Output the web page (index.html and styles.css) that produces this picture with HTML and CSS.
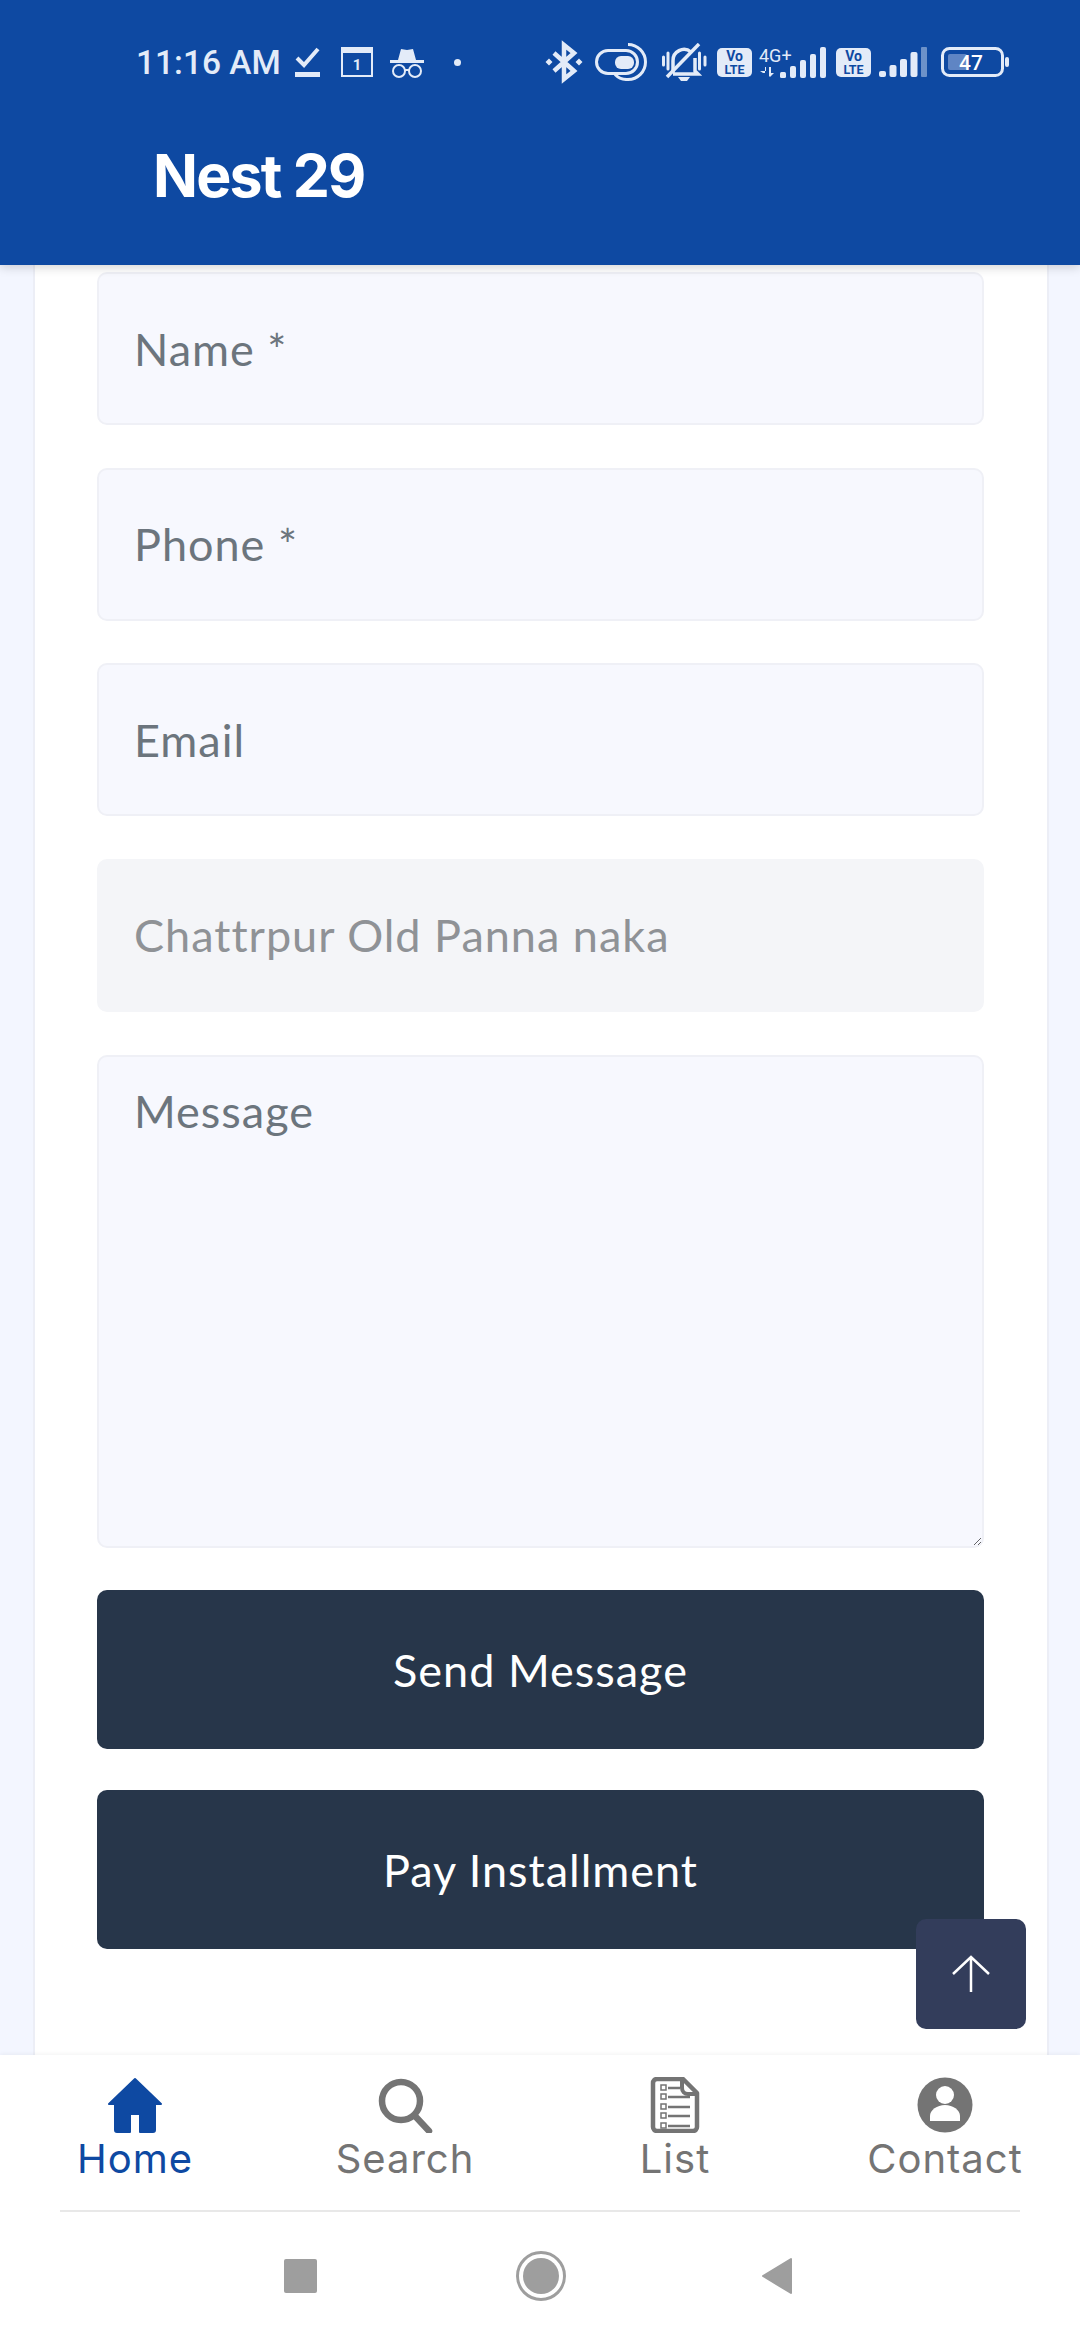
FILE: index.html
```html
<!DOCTYPE html>
<html lang="en">
<head>
  <meta charset="UTF-8">
  <meta name="viewport" content="width=device-width, initial-scale=1.0">
  <title>Nest 29</title>
  <link rel="stylesheet" href="styles.css">
</head>
<body>

<div class="page">
  <header class="topbar">
    <div class="status">
      <div class="status-left">
        <span class="time">11:16 AM</span>
        <svg class="ic-check" viewBox="0 0 25 30"><path d="M2 11l7 7L23 2" fill="none" stroke="currentColor" stroke-width="4"/><rect y="25" width="25" height="5" fill="currentColor"/></svg>
        <svg class="ic-cal" viewBox="0 0 32 30"><path d="M1 1h30v28H1z" fill="none" stroke="currentColor" stroke-width="2"/><rect x="1" y="1" width="30" height="5" fill="currentColor"/><text x="16" y="23" class="cal-num">1</text></svg>
        <svg class="ic-spy" viewBox="0 0 34 31"><path d="M8 13l3-11 6 1 6-1 3 11z" fill="currentColor"/><rect y="13" width="34" height="3" fill="currentColor"/><circle cx="9" cy="24" r="6" fill="none" stroke="currentColor" stroke-width="2"/><circle cx="25" cy="24" r="6" fill="none" stroke="currentColor" stroke-width="2"/><path d="M15 23h4" stroke="currentColor" stroke-width="2"/></svg>
        <span class="dot"></span>
      </div>
      <div class="status-right">
        <svg class="ic-bt" viewBox="0 0 36 38"><path d="M8 10l20 18-10 8V2l10 8L8 28" fill="none" stroke="currentColor" stroke-width="4.500"/><path d="M3 15.500L6.500 19 3 22.500-.500 19zM33 15.500L36.500 19 33 22.500 29.500 19z" fill="currentColor"/></svg>
        <svg class="ic-toggle" viewBox="0 0 54 38"><rect x="1.500" y="7.500" width="41" height="23" rx="11.500" fill="none" stroke="currentColor" stroke-width="3"/><rect x="20" y="13" width="19" height="13" rx="6" fill="currentColor"/><path d="M33 1.500a17.500 17.500 0 0 1 0 35 17 17 0 0 1-13-5" fill="none" stroke="currentColor" stroke-width="3"/></svg>
        <svg class="ic-bell" viewBox="0 0 45 38"><path d="M11 30V18A11 11 0 0 1 29 9M33 15v13l3 3H11" fill="none" stroke="currentColor" stroke-width="3.500"/><path d="M37 1L5 34" stroke="currentColor" stroke-width="3.500"/><path d="M16 34h12l-3 4h-6z" fill="currentColor"/><path d="M1.500 14v8M6 10v16M37.500 10v16M43 14v8" stroke="currentColor" stroke-width="3" stroke-linecap="round"/></svg>
        <svg class="ic-volte" viewBox="0 0 35 29"><rect width="35" height="29" rx="5" fill="currentColor"/><text x="17.500" y="13" class="volte-txt">Vo</text><text x="17.500" y="25.500" class="lte-txt">LTE</text></svg>
        <svg class="ic-4g" viewBox="0 0 68 31"><text x="0" y="15" class="net-txt">4G+</text><path d="M1 24h6v-4h-1v6h-2zM10 20h2v6h3l-4 4-1-1z" fill="currentColor"/><g fill="currentColor"><rect x="21" y="25" width="6" height="6" rx="1.500"/><rect x="31" y="19" width="6" height="12" rx="2"/><rect x="41" y="13" width="6" height="18" rx="2"/><rect x="51" y="7" width="6" height="24" rx="2"/><rect x="61" y="0" width="6" height="31" rx="2"/></g></svg>
        <svg class="ic-volte ic-volte-b" viewBox="0 0 35 29"><rect width="35" height="29" rx="5" fill="currentColor"/><text x="17.500" y="13" class="volte-txt">Vo</text><text x="17.500" y="25.500" class="lte-txt">LTE</text></svg>
        <svg class="ic-signal" viewBox="0 0 48 30"><g fill="currentColor"><rect x="0" y="24" width="7" height="6" rx="2"/><rect x="10.500" y="18" width="7" height="12" rx="2"/><rect x="21" y="12" width="7" height="18" rx="2"/><rect x="31.500" y="5" width="7" height="25" rx="2"/><rect x="42" y="0" width="6" height="30" rx="1" opacity=".45"/></g></svg>
        <svg class="ic-batt" viewBox="0 0 68 30"><rect x="1.500" y="1.500" width="60" height="27" rx="7" fill="none" stroke="currentColor" stroke-width="3"/><rect x="7" y="7" width="19" height="16" rx="2" fill="#5f85c4"/><rect x="64" y="10" width="4" height="10" rx="2" fill="currentColor"/><text x="30" y="22.500" class="batt-txt">47</text></svg>
      </div>
    </div>
    <h1 class="brand">Nest 29</h1>
  </header>

  <main class="content">
    <form class="card">
      <input class="field" type="text" placeholder="Name *">
      <input class="field" type="text" placeholder="Phone *">
      <input class="field" type="text" placeholder="Email">
      <input class="field" type="text" value="Chattrpur Old Panna naka" disabled>
      <textarea class="field field-msg" placeholder="Message"></textarea>
      <button class="btn" type="button">Send Message</button>
      <button class="btn" type="button">Pay Installment</button>
    </form>
    <a class="to-top" href="#">
      <svg viewBox="0 0 38 38" width="38" height="38"><path d="M19 37V2M1 19L19 2l18 17" fill="none" stroke="#fff" stroke-width="2.500"/></svg>
    </a>
  </main>

  <footer class="footer">
    <nav class="tabs">
      <a class="tab active" href="#">
        <svg class="tab-icon" viewBox="0 0 56 56"><path d="M28 2L2 27h6v26a2 2 0 0 0 2 2h13V37h10v18h13a2 2 0 0 0 2-2V27h6z" fill="currentColor" stroke="currentColor" stroke-width="2" stroke-linejoin="round"/></svg>
        <span>Home</span>
      </a>
      <a class="tab" href="#">
        <svg class="tab-icon" viewBox="0 0 56 56"><circle cx="24" cy="24" r="19" fill="none" stroke="currentColor" stroke-width="6.500"/><path d="M38 39l14 15" stroke="currentColor" stroke-width="6.500" stroke-linecap="round"/></svg>
        <span>Search</span>
      </a>
      <a class="tab" href="#">
        <svg class="tab-icon" viewBox="0 0 56 56"><path d="M10 2h26l14 14v34a4 4 0 0 1-4 4H10a4 4 0 0 1-4-4V6a4 4 0 0 1 4-4z" fill="none" stroke="currentColor" stroke-width="4.500" stroke-linejoin="round"/><path d="M35 2v9a6 6 0 0 0 6 6h9" fill="none" stroke="currentColor" stroke-width="4"/><g fill="none" stroke="currentColor" stroke-width="1.500"><rect x="14" y="8" width="5" height="5"/><rect x="14" y="17" width="5" height="5"/><rect x="14" y="27" width="5" height="5"/><rect x="14" y="36" width="5" height="5"/><rect x="14" y="46" width="5" height="5"/></g><path d="M21 11h12M21 20h22M21 30h22M21 39h22M21 49h22" stroke="currentColor" stroke-width="2.500"/></svg>
        <span>List</span>
      </a>
      <a class="tab" href="#">
        <svg class="tab-icon" viewBox="0 0 56 56"><circle cx="28" cy="28" r="27.500" fill="currentColor"/><circle cx="28" cy="18" r="9" fill="#fff"/><path d="M13 44v-5c0-6 7-11 15-11s15 5 15 11v5z" fill="#fff"/></svg>
        <span>Contact</span>
      </a>
    </nav>
    <div class="tabs-line"></div>
    <div class="sysnav">
      <span class="sys-square"></span>
      <svg class="sys-home" viewBox="0 0 50 50"><circle cx="25" cy="25" r="23.500" fill="none" stroke="#9e9e9e" stroke-width="3"/><circle cx="25" cy="25" r="18" fill="#9e9e9e"/></svg>
      <svg class="sys-back" viewBox="0 0 32 38"><path d="M30 2v34L2 19z" fill="#9e9e9e" stroke="#9e9e9e" stroke-width="2" stroke-linejoin="round"/></svg>
    </div>
  </footer>
</div>

</body>
</html>
```

FILE: styles.css
```css
* {
  box-sizing: border-box;
}

body {
  margin: 0;
  font-family: "Lato", "Open Sans", sans-serif;
  background-color: #fff;
}

a {
  text-decoration: none;
}

.page {
  height: 2340px;
  width: 1080px;
  display: flex;
  flex-direction: column;
  overflow: hidden;
}

.topbar {
  height: 265px;
  background-color: #0e49a2;
  color: #e3ebf8;
  box-shadow: 0 2px 10px rgba(0, 0, 0, 0.18);
  position: relative;
  z-index: 2;
  flex-shrink: 0;
}

.status {
  height: 124px;
  padding: 0 71px 0 136px;
  display: flex;
  justify-content: space-between;
  align-items: center;
}

.status-left,
.status-right {
  display: flex;
  align-items: center;
}

.time {
  font-family: "Roboto", sans-serif;
  font-size: 33.500px;
  font-weight: 500;
  width: 159px;
}

.ic-check { width: 25px; height: 30px; margin-right: 21px; }
.ic-cal { width: 32px; height: 30px; margin-right: 17px; }
.ic-spy { width: 34px; height: 31px; margin-right: 30px; }

.dot {
  width: 7px;
  height: 7px;
  border-radius: 50%;
  background-color: #e3ebf8;
}

.ic-bt { width: 36px; height: 38px; margin-right: 13px; overflow: visible; }
.ic-toggle { width: 54px; height: 38px; margin-right: 13px; }
.ic-bell { width: 45px; height: 38px; margin-right: 10px; }
.ic-volte { width: 35px; height: 29px; margin-right: 7px; }
.ic-volte-b { margin-right: 8px; }
.ic-4g { width: 68px; height: 31px; margin-right: 9px; overflow: visible; }
.ic-signal { width: 48px; height: 30px; margin-right: 14px; }
.ic-batt { width: 68px; height: 30px; }

.cal-num,
.volte-txt,
.lte-txt,
.batt-txt {
  font-family: "Roboto", sans-serif;
  text-anchor: middle;
  font-weight: 700;
}

.cal-num { font-size: 15px; fill: #e3ebf8; }
.volte-txt { font-size: 14px; fill: #0e49a2; }
.lte-txt { font-size: 12.500px; fill: #0e49a2; }
.net-txt { font-family: "Roboto", sans-serif; font-size: 18px; fill: #e3ebf8; }
.batt-txt { font-size: 21px; fill: #fff; font-weight: 500; }

.brand {
  margin: 0;
  padding: 22px 0 0 153px;
  font-family: "Inter", sans-serif;
  font-size: 59px;
  font-weight: 700;
  line-height: 60px;
  color: #fff;
  letter-spacing: -1.800px;
}

.content {
  flex: 1;
  background-color: #f3f6ff;
  padding: 0 31px 0 33px;
  position: relative;
  min-height: 0;
}

.card {
  height: 100%;
  background-color: #fff;
  border-left: 2px solid #eceef6;
  border-right: 2px solid #eceef6;
  padding: 7px 63px 0 62px;
  display: flex;
  flex-direction: column;
}

.field {
  display: block;
  width: 100%;
  height: 153px;
  flex-shrink: 0;
  margin-bottom: 42.670px;
  padding: 0 35px;
  background-color: #f7f8fe;
  border: 2px solid #eff0f6;
  border-radius: 10px;
  font-family: inherit;
  font-size: 45px;
  letter-spacing: 1px;
  color: #6c757d;
  outline: none;
}

.field::placeholder {
  color: #6c757d;
  opacity: 1;
}

.field:disabled {
  background-color: #f4f5f8;
  border-color: #f4f5f8;
  color: #8f9296;
  -webkit-text-fill-color: #8f9296;
  opacity: 1;
}

.field-msg {
  height: 493px;
  padding-top: 27px;
  resize: vertical;
}

.btn {
  width: 100%;
  height: 159px;
  flex-shrink: 0;
  margin-bottom: 41px;
  background-color: #27364a;
  color: #fff;
  border: none;
  border-radius: 10px;
  font-family: inherit;
  font-size: 45px;
  letter-spacing: 1px;
}

.to-top {
  position: absolute;
  left: 916px;
  top: 1654px;
  width: 110px;
  height: 110px;
  border-radius: 10px;
  background-color: #333d5b;
  display: flex;
  align-items: center;
  justify-content: center;
}

.footer {
  flex-shrink: 0;
  height: 285px;
  background-color: #fff;
  box-shadow: 0 -1px 4px rgba(0, 0, 0, 0.05);
  position: relative;
  z-index: 2;
}

.tabs {
  height: 155px;
  padding-top: 22px;
  display: grid;
  grid-template-columns: repeat(4, 1fr);
}

.tabs-line {
  height: 2px;
  margin: 0 60px;
  background-color: #e8e8e8;
}

.tab {
  display: flex;
  flex-direction: column;
  align-items: center;
  color: #747474;
  font-family: "Inter", sans-serif;
  font-size: 40px;
  letter-spacing: 1px;
  line-height: 46px;
}

.tab.active {
  color: #0e49a2;
}

.tab-icon {
  width: 56px;
  height: 56px;
  margin-bottom: 3px;
}

.sysnav {
  height: 128px;
  display: flex;
  align-items: center;
  justify-content: center;
  padding-right: 4px;
}

.sys-square {
  width: 33px;
  height: 34px;
  border-radius: 2px;
  background-color: #9e9e9e;
}

.sys-home {
  width: 50px;
  height: 50px;
  margin: 0 195px 0 199px;
}

.sys-back {
  width: 32px;
  height: 38px;
}
```
